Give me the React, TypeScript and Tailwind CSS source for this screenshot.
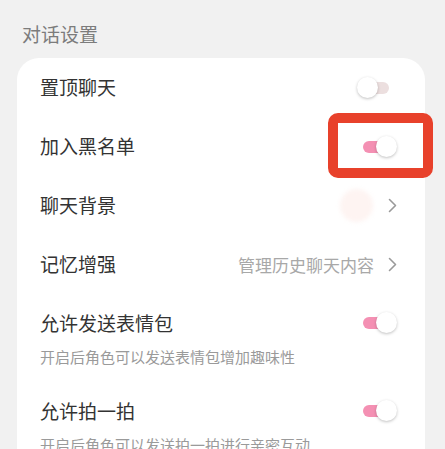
import { ReactNode } from "react";

type ToggleProps = { on?: boolean };

function Toggle({ on }: ToggleProps) {
    return (
        <div className="relative w-[41px] h-[22px] shrink-0">
            <div
                className={`absolute top-[5px] h-[12px] rounded-full ${
                    on ? "left-[7px] right-[6px] bg-[#f490b3]" : "left-[4px] right-[9px] bg-[#ecdfdf]"
                }`}
            />
            <div
                className={`absolute top-0 w-[21px] h-[21px] rounded-full bg-white shadow-[0_1px_3px_rgba(0,0,0,0.25)] ${
                    on ? "right-0" : "left-0"
                }`}
            />
        </div>
    );
}

function Chevron() {
    return (
        <svg width="9" height="15" viewBox="0 0 9 15" className="shrink-0">
            <polyline points="1.5,1.5 7.5,7.5 1.5,13.5" fill="none" stroke="#9a9a9a" strokeWidth="1.6" strokeLinecap="round" strokeLinejoin="round" />
        </svg>
    );
}

function Row({ label, children }: { label: string; children?: ReactNode }) {
    return (
        <div className="flex items-center justify-between h-[59px] pl-[23px] pr-[27px]">
            <span className="text-[19px] text-[#333]">{label}</span>
            {children}
        </div>
    );
}

function SubRow({ label, desc, on }: { label: string; desc: string; on?: boolean }) {
    return (
        <div className="pl-[23px] pr-[28px] pt-[17px] pb-[15px]">
            <div className="flex items-center justify-between h-[24px]">
                <span className="text-[19px] leading-[24px] text-[#333]">{label}</span>
                <Toggle on={on} />
            </div>
            <p className="mt-[12px] text-[15px] leading-[20px] text-[#9a9a9a]">{desc}</p>
        </div>
    );
}

export default function App() {
    return (
        <div
            className="relative w-[445px] h-[449px] overflow-hidden bg-[#f1f1f1]"
            style={{ fontFamily: '"Noto Sans CJK SC", "Noto Sans", sans-serif' }}>
            <h2 className="pl-[22px] pt-[22px] h-[58px] text-[19px] leading-[24px] text-[#7c7c7c]">对话设置</h2>

            <div className="ml-[17px] w-[408px] bg-white rounded-t-[22px]">
                <Row label="置顶聊天">
                    <Toggle />
                </Row>
                <Row label="加入黑名单">
                    <div className="pr-[1px]">
                        <Toggle on />
                    </div>
                </Row>
                <Row label="聊天背景">
                    <div className="flex items-center gap-[15px] pr-[1px]">
                        <div className="w-[33px] h-[33px] rounded-full bg-[#fef4f2] blur-[2px]" />
                        <Chevron />
                    </div>
                </Row>
                <Row label="记忆增强">
                    <div className="flex items-center gap-[14px] pr-[1px]">
                        <span className="text-[17px] text-[#a8a8a8]">管理历史聊天内容</span>
                        <Chevron />
                    </div>
                </Row>
                <SubRow label="允许发送表情包" desc="开启后角色可以发送表情包增加趣味性" on />
                <SubRow label="允许拍一拍" desc="开启后角色可以发送拍一拍进行亲密互动" on />
            </div>

            {/* 标注框 */}
            <div className="absolute left-[328px] top-[113px] w-[105px] h-[65px] border-[10px] border-[#e8412b] rounded-[10px]" />
        </div>
    );
}
